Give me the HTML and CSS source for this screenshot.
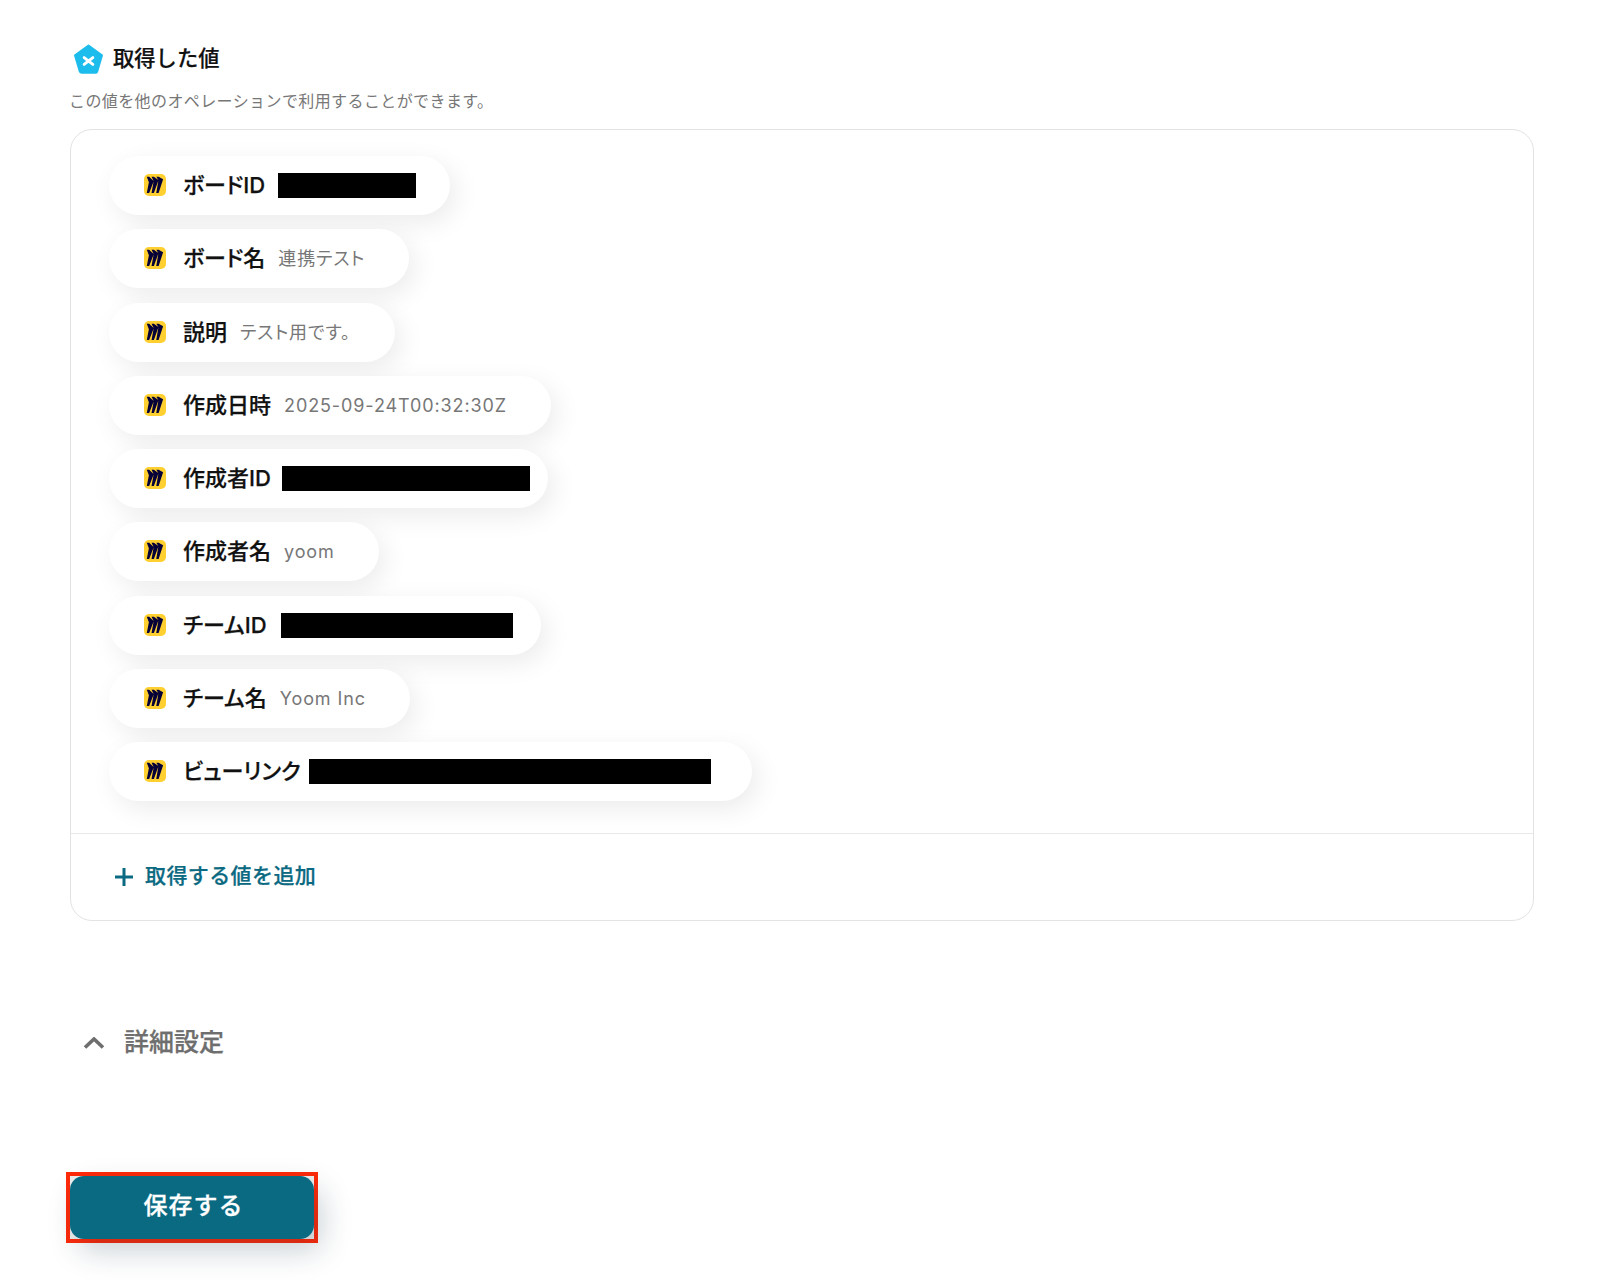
FILE: index.html
```html
<!DOCTYPE html>
<html lang="ja">
<head>
<meta charset="utf-8">
<title>取得した値</title>
<link rel="stylesheet" href="styles.css">
</head>
<body>
<svg class="defs" width="0" height="0" aria-hidden="true">
  <symbol id="miro" viewBox="0 0 22 22">
    <rect width="22" height="22" rx="5" fill="#ffd02f"/>
    <path transform="translate(2.8 2.8) scale(.68)" fill="#050038" d="M17.392 0H13.9L17 4.808 10.444 0H6.949l3.102 6.3L3.494 0H0l3.05 8.131L0 24h3.494L10.05 6.985 6.949 24h3.494L17 5.494 13.899 24h3.493L24 3.672 17.392 0z"/>
  </symbol>
</svg>
<main class="page">
  <header class="head">
    <svg class="penta" viewBox="0 0 30 30" aria-hidden="true">
      <path d="M15 1.5 28 11 23.4 26.5a2 2 0 0 1-1.9 1.4H8.5a2 2 0 0 1-1.9-1.4L2 11z" fill="#1cbcec" stroke="#1cbcec" stroke-width="2" stroke-linejoin="round"/>
      <path d="M10.8 13.2 19.2 19.8M19.2 13.2 10.8 19.8" stroke="#fff" stroke-width="2.8" stroke-linecap="round"/>
    </svg>
    <h2 class="title">取得した値</h2>
  </header>
  <p class="sub">この値を他のオペレーションで利用することができます。</p>
  <section class="card">
    <ul class="list">
      <li class="pill"><svg class="ic"><use href="#miro"/></svg><span class="key">ボードID</span><span class="red r1"></span></li>
      <li class="pill"><svg class="ic"><use href="#miro"/></svg><span class="key">ボード名</span><span class="val">連携テスト</span></li>
      <li class="pill"><svg class="ic"><use href="#miro"/></svg><span class="key">説明</span><span class="val">テスト用です。</span></li>
      <li class="pill"><svg class="ic"><use href="#miro"/></svg><span class="key">作成日時</span><span class="val">2025-09-24T00:32:30Z</span></li>
      <li class="pill"><svg class="ic"><use href="#miro"/></svg><span class="key">作成者ID</span><span class="red r2"></span></li>
      <li class="pill"><svg class="ic"><use href="#miro"/></svg><span class="key">作成者名</span><span class="val">yoom</span></li>
      <li class="pill"><svg class="ic"><use href="#miro"/></svg><span class="key">チームID</span><span class="red r3"></span></li>
      <li class="pill"><svg class="ic"><use href="#miro"/></svg><span class="key">チーム名</span><span class="val">Yoom Inc</span></li>
      <li class="pill"><svg class="ic"><use href="#miro"/></svg><span class="key">ビューリンク</span><span class="red r4"></span></li>
    </ul>
    <div class="add">
      <svg class="plus" viewBox="0 0 20 20" aria-hidden="true"><path d="M10 1v18M1 10h18" stroke="#0b6a82" stroke-width="3" fill="none"/></svg>
      <span class="addlabel">取得する値を追加</span>
    </div>
  </section>
  <div class="detail">
    <svg class="chev" viewBox="0 0 22 12" aria-hidden="true"><path d="M2 10.5 11 2l9 8.5" stroke="#6e6e6e" stroke-width="3.6" fill="none"/></svg>
    <span class="detaillabel">詳細設定</span>
  </div>
  <div class="actions">
    <div class="frame"><button class="save" type="button">保存する</button></div>
  </div>
</main>
</body>
</html>
```
FILE: styles.css
```css
* { box-sizing: border-box; }
html, body { margin: 0; padding: 0; background: #fff; }
body {
  height: 1280px;
  overflow: hidden;
  font-family: Inter, "Noto Sans CJK JP", "Noto Sans", sans-serif;
  color: #111;
}
.defs { position: absolute; }
.page { padding: 44px 66px 0 70px; }
.head { display: flex; align-items: center; gap: 9px; padding-left: 3px; height: 30px; }
.penta { width: 31px; height: 31px; flex: none; }
.title { margin: 0; padding-bottom: 2px; font-size: 21.3px; font-weight: 500; -webkit-text-stroke: .2px; line-height: 28px; }
.sub { margin: 15px 0 0 -1px; font-size: 16px; line-height: 24px; letter-spacing: .4px; color: #777; }
.card {
  margin-top: 16px;
  border: 1px solid #e3e3e3;
  border-radius: 22px;
  background: #fff;
}
.list {
  list-style: none;
  margin: 0;
  padding: 26px 0 32px 38px;
  display: flex;
  flex-direction: column;
  align-items: flex-start;
  gap: 14.3px;
}
.pill {
  display: flex;
  align-items: center;
  height: 59px;
  padding: 0 0 0 35px;
  border-radius: 30px;
  background: #fff;
  box-shadow: 6px 8px 26px rgba(0, 0, 0, .08);
}
.ic { width: 22px; height: 22px; flex: none; margin: 0 17px 1px 0; }
.key {
  font-size: 22px;
  line-height: 28px;
  padding-bottom: 1px;
  font-weight: 500;
  -webkit-text-stroke: .25px;
  font-feature-settings: "palt";
  color: #111;
  white-space: nowrap;
  margin-right: 13px;
}
.val {
  font-size: 18px;
  line-height: 26px;
  padding-top: 1px;
  letter-spacing: .9px;
  font-feature-settings: "palt";
  color: #777;
  white-space: nowrap;
  margin-right: 44px;
}
.red { display: block; height: 25px; background: #000; }
.r1 { width: 138px; margin-right: 34px; }
.r2 { width: 248px; margin-left: -2px; margin-right: 18px; }
.r3 { width: 232px; margin-left: 1px; margin-right: 28px; }
.r4 { width: 402px; margin-left: -5px; margin-right: 41px; }
.add {
  display: flex;
  align-items: center;
  gap: 11px;
  height: 87px;
  padding-left: 43px;
  border-top: 1px solid #e8e8e8;
  font-size: 21px;
  font-weight: 500;
  -webkit-text-stroke: .25px;
  color: #0b6a82;
}
.addlabel { padding-bottom: 6px; letter-spacing: .4px; }
.plus { width: 20px; height: 20px; flex: none; }
.detail {
  display: flex;
  align-items: center;
  gap: 19px;
  margin-top: 102px;
  padding-left: 13px;
  height: 40px;
  font-size: 25px;
  font-weight: 500;
  -webkit-text-stroke: .25px;
  color: #6e6e6e;
}
.detaillabel { padding-bottom: 6px; }
.chev { width: 22px; height: 12px; flex: none; }
.actions { margin-top: 109px; margin-left: -4px; display: flex; }
.frame { border: 4px solid #ff2a0a; background: #eee; display: flex; }
.save {
  width: 244px;
  height: 63px;
  border: 0;
  border-radius: 14px;
  padding: 0 0 9px 3px;
  background: #0a6a82;
  color: #fff;
  font: 500 24px Inter, "Noto Sans CJK JP", sans-serif;
  -webkit-text-stroke: .3px;
  letter-spacing: 1px;
  box-shadow: 8px 12px 30px rgba(20, 50, 70, .22);
}
```
